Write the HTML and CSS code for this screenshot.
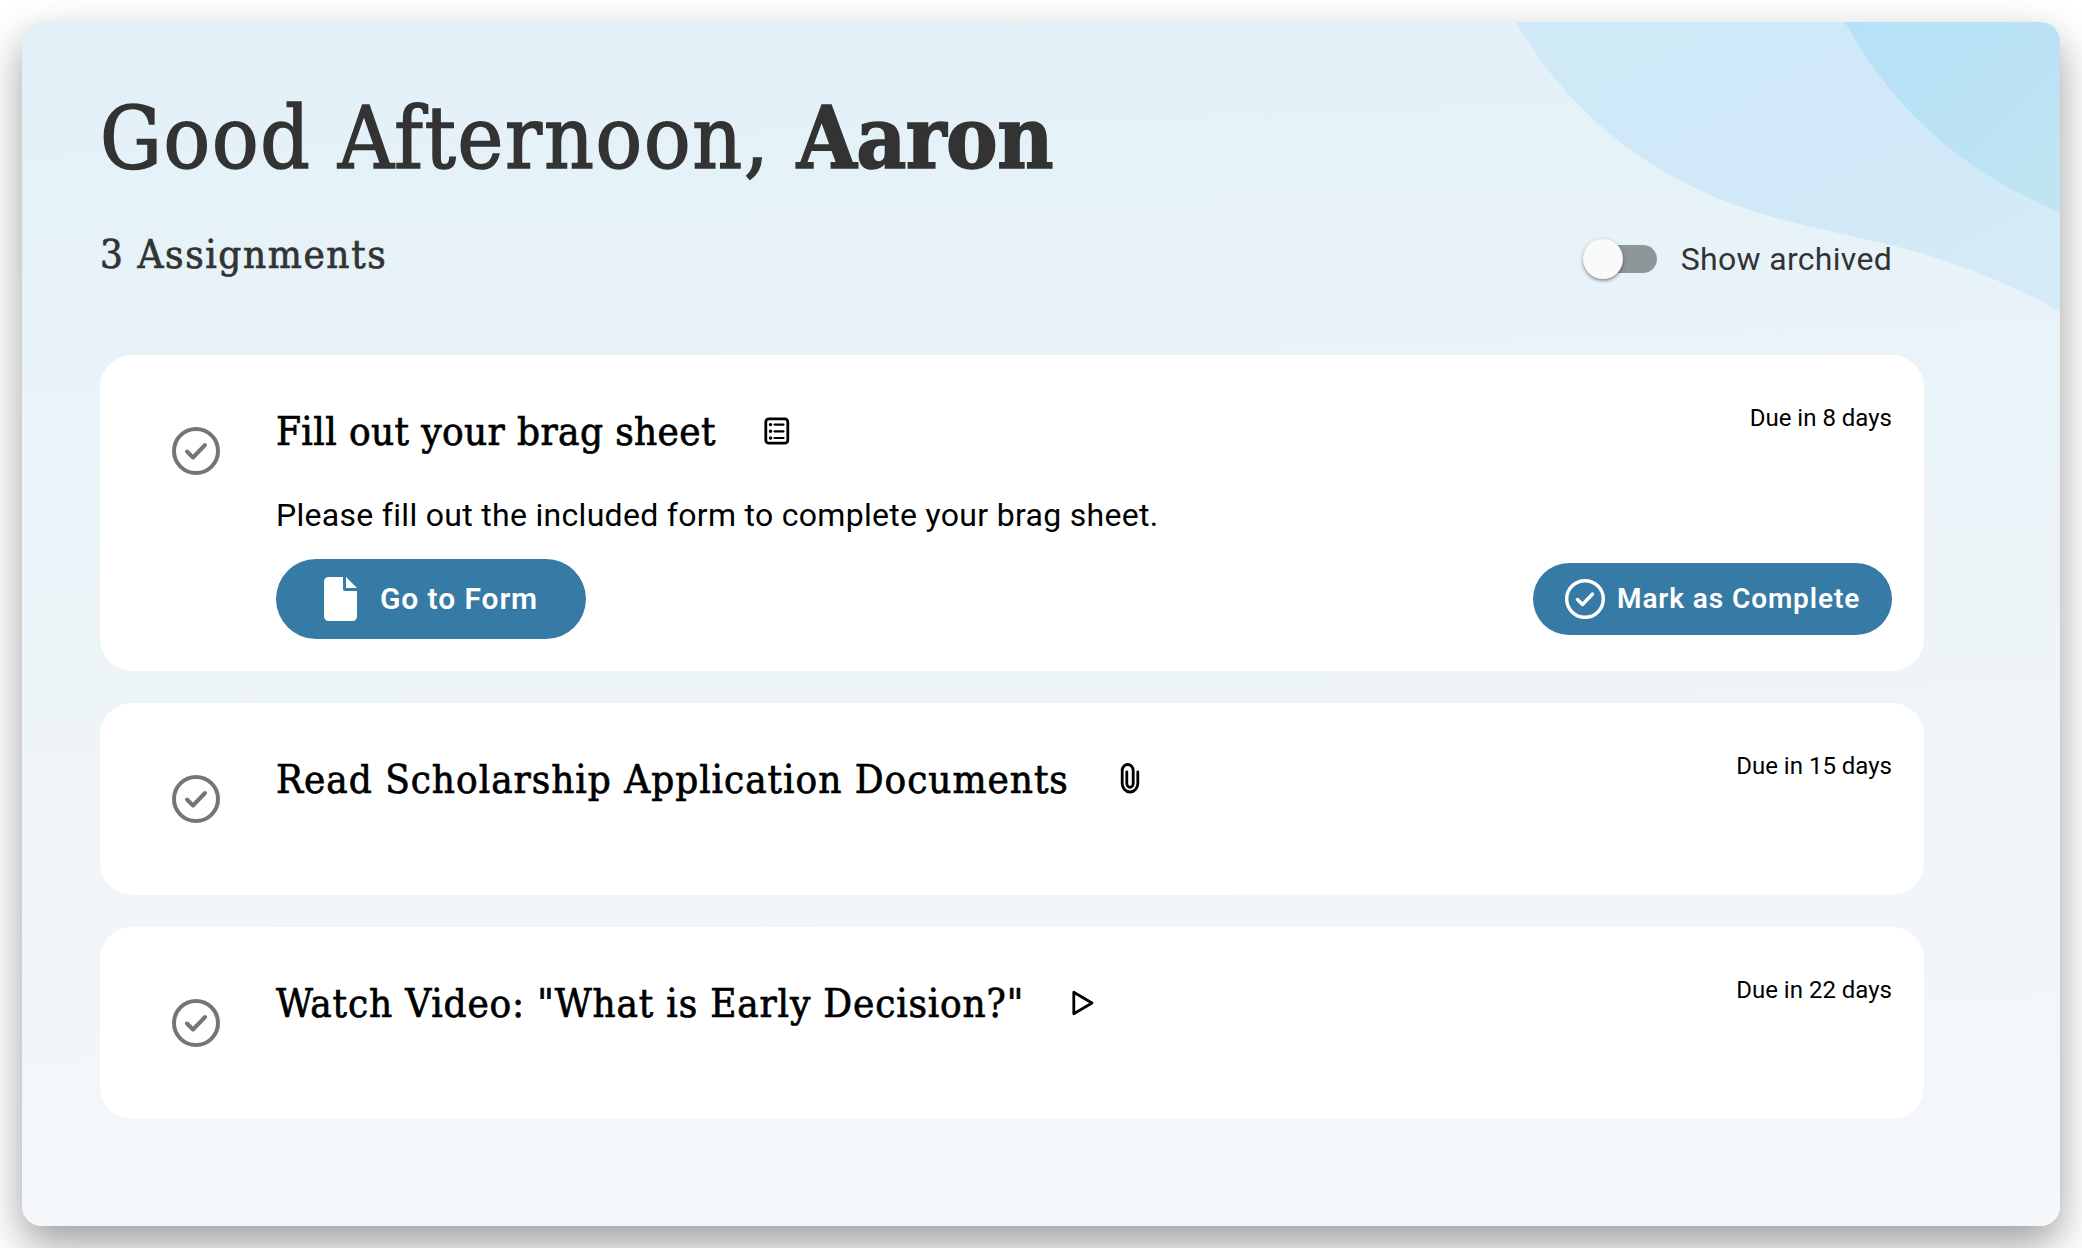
FILE: index.html
```html
<!DOCTYPE html>
<html lang="en">
  <head>
    <meta charset="UTF-8" />
    <meta name="viewport" content="width=device-width, initial-scale=1.0" />
    <title>Assignments</title>
    <link rel="stylesheet" href="styles.css">
  </head>
  <body>
    <main class="dashboard">
      <svg class="waves" viewBox="0 0 544 290" aria-hidden="true">
        <defs>
          <linearGradient id="wave-light" x1="0" y1="0" x2="1" y2="1">
            <stop offset="0" stop-color="#cfe9f7" />
            <stop offset="0.5" stop-color="#d0e8f7" />
            <stop offset="1" stop-color="#d5ebf7" />
          </linearGradient>
          <linearGradient id="wave-dark" x1="0" y1="0" x2="1" y2="1">
            <stop offset="0" stop-color="#b7e0f7" />
            <stop offset="0.65" stop-color="#bce3f4" />
            <stop offset="1" stop-color="#bfe6ef" />
          </linearGradient>
        </defs>
        <path fill="url(#wave-light)" d="M0 0C54 93 134 156 240 190C294 207 344 214 404 231C459 247 506 268 544 290V0Z" />
        <path fill="url(#wave-dark)" d="M329 0C374 83 444 150 544 190V0Z" />
      </svg>

      <header class="header">
        <h1>Good Afternoon, <strong>Aaron</strong></h1>
        <div class="summary">
          <h2>3 Assignments</h2>
          <label class="toggle">
            <span class="track"><span class="knob"></span></span>
            <span class="toggle-text">Show archived</span>
          </label>
        </div>
      </header>

      <section class="assignments">
        <article class="card">
          <svg class="status" viewBox="0 0 48 48">
            <circle cx="24" cy="24" r="22" />
            <path d="M15 24.5L21 30.5L33 18" />
          </svg>
          <div class="content">
            <div class="title-row">
              <h3 class="title-form">Fill out your brag sheet</h3>
              <svg class="type-icon form-icon" viewBox="0 0 26 28">
                <rect x="1.8" y="1.8" width="22" height="24.4" rx="3" />
                <path d="M10.5 7.6H19.5M10.5 14.3H19.5M10.5 21H19.5" />
                <path class="dots" d="M6.5 7.6H6.6M6.5 14.3H6.6M6.5 21H6.6" />
              </svg>
              <span class="due">Due in 8 days</span>
            </div>
            <p class="description">Please fill out the included form to complete your brag sheet.</p>
            <div class="actions">
              <button class="button go">
                <svg viewBox="0 0 33 44">
                  <path d="M19 0H5Q0 0 0 5V39Q0 44 5 44H28Q33 44 33 39V14H21Q19 14 19 12Z" />
                  <path d="M22 0L33 11H22Z" />
                </svg>
                <span>Go to Form</span>
              </button>
              <button class="button complete">
                <svg viewBox="0 0 40 40">
                  <circle cx="20" cy="20" r="18.3" />
                  <path d="M12.5 20.5L17.5 25.5L27.5 15" />
                </svg>
                <span>Mark as Complete</span>
              </button>
            </div>
          </div>
        </article>

        <article class="card">
          <svg class="status" viewBox="0 0 48 48">
            <circle cx="24" cy="24" r="22" />
            <path d="M15 24.5L21 30.5L33 18" />
          </svg>
          <div class="content">
            <div class="title-row">
              <h3 class="title-documents">Read Scholarship Application Documents</h3>
              <svg class="type-icon clip-icon" viewBox="0 0 20 31">
                <path d="M17.8 9V20.5A7.8 8.5 0 0 1 2.2 20.5V7.5A5.5 6 0 0 1 13.2 7.5V20.5A3.2 3.8 0 0 1 6.8 20.5V9" />
              </svg>
              <span class="due">Due in 15 days</span>
            </div>
          </div>
        </article>

        <article class="card">
          <svg class="status" viewBox="0 0 48 48">
            <circle cx="24" cy="24" r="22" />
            <path d="M15 24.5L21 30.5L33 18" />
          </svg>
          <div class="content">
            <div class="title-row">
              <h3 class="title-video">Watch Video: "What is Early Decision?"</h3>
              <svg class="type-icon play-icon" viewBox="0 0 22 26">
                <path d="M1.8 2.3V23.7L20 13Z" />
              </svg>
              <span class="due">Due in 22 days</span>
            </div>
          </div>
        </article>
      </section>
    </main>
  </body>
</html>
```
FILE: styles.css
```css
* {
  box-sizing: border-box;
  margin: 0;
  padding: 0;
}

body {
  height: 1248px;
  padding: 22px;
  background: #fff;
  font-family: Roboto, "Liberation Sans", sans-serif;
  overflow: hidden;
}

h1,
h2,
h3 {
  font-family: "Roboto Slab", "DejaVu Serif Condensed", "DejaVu Serif", serif;
  font-stretch: condensed;
  font-weight: 400;
  white-space: nowrap;
  -webkit-text-stroke: 0.7px currentColor;
}

.dashboard {
  position: relative;
  width: 2038px;
  height: 1204px;
  padding: 64px 136px 0 78px;
  border-radius: 20px;
  background: linear-gradient(178deg, #e2f0f7 0%, #e8f3f9 26%, #edf4f8 52%, #f2f6fa 78%, #f4f8fb 100%);
  box-shadow: 0 18px 42px rgba(0, 0, 0, 0.38);
}

.waves {
  position: absolute;
  top: 0;
  right: 0;
  width: 544px;
  height: 290px;
  border-top-right-radius: 20px;
}

.header {
  position: relative;
  height: 269px;
  padding-right: 32px;
  color: #333;
}

h1 {
  height: 104px;
  font-size: 86px;
  line-height: 104px;
  letter-spacing: 1.8px;
  -webkit-text-stroke-width: 1.6px;
}

h1 strong {
  font-weight: 700;
  letter-spacing: -0.5px;
}

.summary {
  display: flex;
  justify-content: space-between;
  align-items: flex-start;
  padding-top: 38px;
}

h2 {
  font-size: 40px;
  line-height: 52px;
  letter-spacing: 1.6px;
}

.toggle {
  display: flex;
  align-items: center;
  gap: 24px;
  height: 62px;
  font-size: 32px;
  letter-spacing: 0.3px;
}

.track {
  display: flex;
  align-items: center;
  width: 72px;
  height: 28px;
  border-radius: 14px;
  background: #8e9699;
}

.knob {
  width: 40px;
  height: 40px;
  margin-left: -2px;
  flex: none;
  border-radius: 50%;
  background: #fafafa;
  box-shadow: 0 2px 3px rgba(0, 0, 0, 0.3), 0 1px 5px rgba(0, 0, 0, 0.15);
}

.assignments {
  display: flex;
  flex-direction: column;
  gap: 32px;
}

.card {
  display: flex;
  min-height: 192px;
  padding: 32px 32px 32px 72px;
  border-radius: 32px;
  background: #fff;
  color: #000;
}

.status {
  width: 48px;
  height: 48px;
  margin: 40px 56px 0 0;
  flex: none;
  fill: none;
  stroke: #757575;
  stroke-width: 4;
  stroke-linecap: round;
  stroke-linejoin: round;
}

.content {
  flex: 1;
}

.title-row {
  display: flex;
  align-items: flex-start;
  height: 88px;
}

h3 {
  font-size: 40px;
  line-height: 88px;
}

.title-form {
  letter-spacing: 0.4px;
}

.title-documents {
  letter-spacing: 0.97px;
}

.title-video {
  letter-spacing: 0.83px;
}

.type-icon {
  flex: none;
  fill: none;
  stroke: #000;
  stroke-width: 2.8;
  stroke-linecap: round;
  stroke-linejoin: round;
}

.form-icon {
  width: 26px;
  height: 28px;
  margin: 30px 0 0 48px;
}

.form-icon path {
  stroke-width: 2.2;
}

.form-icon .dots {
  stroke-width: 3.4;
}

.clip-icon {
  width: 20px;
  height: 31px;
  margin: 28px 0 0 51px;
}

.play-icon {
  width: 22px;
  height: 26px;
  margin: 31px 0 0 48px;
}

.due {
  margin: 17px 0 0 auto;
  font-size: 24px;
  line-height: 28px;
}

.description {
  height: 84px;
  font-size: 32px;
  line-height: 80px;
  letter-spacing: 0.3px;
  white-space: nowrap;
}

.actions {
  display: flex;
  align-items: center;
  justify-content: space-between;
}

.button {
  display: flex;
  align-items: center;
  border: none;
  background: #367ba6;
  color: #fff;
  font-family: inherit;
  font-weight: 600;
  letter-spacing: 0.9px;
  white-space: nowrap;
  cursor: pointer;
}

.button svg {
  flex: none;
  fill: #fff;
}

.button span {
  padding-bottom: 2px;
}

.go {
  width: 310px;
  height: 80px;
  padding-left: 48px;
  gap: 23px;
  border-radius: 40px;
  font-size: 30px;
}

.go svg {
  width: 33px;
  height: 44px;
}

.complete {
  width: 359px;
  height: 72px;
  padding-left: 32px;
  gap: 12px;
  border-radius: 36px;
  font-size: 28px;
}

.complete svg {
  width: 40px;
  height: 40px;
  fill: none;
  stroke: #fff;
  stroke-width: 3.4;
  stroke-linecap: round;
  stroke-linejoin: round;
}
```
